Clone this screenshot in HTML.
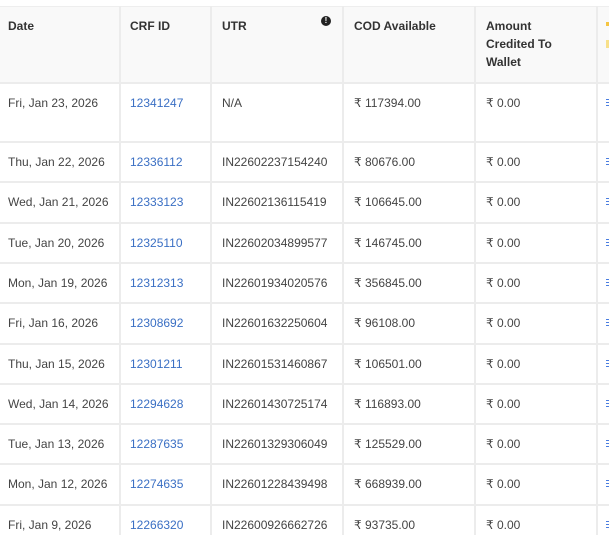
<!DOCTYPE html>
<html><head><style>
body{margin:0;width:609px;height:535px;overflow:hidden;background:#fff;font-family:"Liberation Sans",sans-serif;font-size:12px;color:#333;position:relative}
.hdr{position:absolute;left:0;top:6px;width:609px;height:76px;background:#f9f9f9;border-top:1px solid #eee}
.h{position:absolute;font-weight:bold;font-size:12px;color:#333;line-height:18px}
.vl{position:absolute;top:6px;width:2px;height:529px;background:#ececec}
.hl{position:absolute;left:0;width:609px;height:2px;background:#ececec}
.c{position:absolute;font-size:12px;color:#444;white-space:nowrap}
.a{color:#3a6fc4}
.ic{position:absolute;left:606px;width:3px;height:7px;background:repeating-linear-gradient(#4a7de0 0 1px,transparent 1px 3px)}
</style></head><body>
<div class="hdr"></div>
<div class="vl" style="left:119px"></div>
<div class="vl" style="left:210px"></div>
<div class="vl" style="left:342px"></div>
<div class="vl" style="left:474px"></div>
<div class="vl" style="left:596px"></div>
<div class="h" style="left:8px;top:17px">Date</div>
<div class="h" style="left:130px;top:17px">CRF ID</div>
<div class="h" style="left:222px;top:17px">UTR</div>
<div style="position:absolute;left:321px;top:16px;width:10px;height:10px;border-radius:50%;background:#222;color:#fff;font-size:8px;font-weight:bold;line-height:10px;text-align:center">!</div>
<div class="h" style="left:354px;top:17px">COD Available</div>
<div class="h" style="left:486px;top:17px">Amount<br>Credited To<br>Wallet</div>
<div style="position:absolute;left:606px;top:22px;width:3px;height:4px;background:#f5c542"></div>
<div style="position:absolute;left:606px;top:40px;width:3px;height:8px;background:#f8e08a"></div>
<div class="hl" style="top:82px"></div>
<div id="rows"></div>
<script>
var d=[["Fri, Jan 23, 2026","12341247","N/A","117394.00"],["Thu, Jan 22, 2026","12336112","IN22602237154240","80676.00"],["Wed, Jan 21, 2026","12333123","IN22602136115419","106645.00"],["Tue, Jan 20, 2026","12325110","IN22602034899577","146745.00"],["Mon, Jan 19, 2026","12312313","IN22601934020576","356845.00"],["Fri, Jan 16, 2026","12308692","IN22601632250604","96108.00"],["Thu, Jan 15, 2026","12301211","IN22601531460867","106501.00"],["Wed, Jan 14, 2026","12294628","IN22601430725174","116893.00"],["Tue, Jan 13, 2026","12287635","IN22601329306049","125529.00"],["Mon, Jan 12, 2026","12274635","IN22601228439498","668939.00"],["Fri, Jan 9, 2026","12266320","IN22600926662726","93735.00"]];
var h="";
for(var i=0;i<d.length;i++){var t=i==0?96:155+(i-1)*40.3;var r=d[i];
h+='<div class="c" style="left:8px;top:'+t+'px">'+r[0]+'</div><div class="c a" style="left:130px;top:'+t+'px">'+r[1]+'</div><div class="c" style="left:222px;top:'+t+'px">'+r[2]+'</div><div class="c" style="left:354px;top:'+t+'px">₹ '+r[3]+'</div><div class="c" style="left:486px;top:'+t+'px">₹ 0.00</div><div class="ic" style="top:'+(t+3)+'px"></div>';
if(i<d.length-1){var l=i==0?141:141+i*40.3;h+='<div class="hl" style="top:'+l+'px"></div>';}}
document.getElementById("rows").innerHTML=h;
</script>
</body></html>
